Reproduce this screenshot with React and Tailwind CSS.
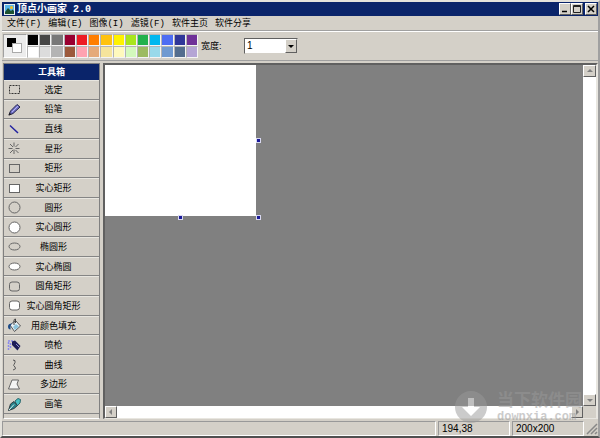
import { useState } from "react";

const menus = [
  { name: "文件", key: "(F)" },
  { name: "编辑", key: "(E)" },
  { name: "图像", key: "(I)" },
  { name: "滤镜", key: "(F)" },
  { name: "软件主页" },
  { name: "软件分享" }
];

const palette = [
  "#000000", "#464646", "#787878", "#990030", "#ed1c24", "#ff7e00", "#ffc20e",
  "#fff200", "#a8e61d", "#22b14c", "#00b7ef", "#4d6df3", "#2f3699", "#6f3198",
  "#ffffff", "#dcdcdc", "#b4b4b4", "#9c5a3c", "#ffa3b1", "#e5aa7a", "#f5e49c",
  "#fff9bd", "#d3f9bc", "#9dbb61", "#99d9ea", "#709ad1", "#546d8e", "#b5a5d5"
];

const tools = [
  { name: "选定", icon: <rect x="2.5" y="3.5" width="10" height="8" fill="none" stroke="#333" strokeDasharray="2 1" /> },
  {
    name: "铅笔",
    icon: (
      <>
        <path d="M2 13l1.5-4L10 2.500 13 5 6 11.500z" fill="#7474c8" stroke="#22224e" strokeWidth="1" />
        <path d="M5 10l6-6" stroke="#b4b4f4" />
        <path d="M1.500 13.500l1-3 2 2z" fill="#222" />
      </>
    )
  },
  { name: "直线", icon: <path d="M3 3.500l8 7.500" stroke="#2222a0" strokeWidth="1.500" /> },
  { name: "星形", icon: <path d="M7 1.500v4M7 8.500v4.500M1.500 7.500h4M8.500 7.500h4M3 3l3 3M11.500 3l-3 3M3 12l3-3M11.500 12l-3-3" stroke="#666" /> },
  { name: "矩形", icon: <rect x="2.500" y="3.500" width="10" height="8" fill="none" stroke="#666" /> },
  { name: "实心矩形", icon: <rect x="2.500" y="3.500" width="10" height="8" fill="#fff" stroke="#666" /> },
  { name: "圆形", icon: <circle cx="7.500" cy="7.500" r="5.500" fill="none" stroke="#666" /> },
  { name: "实心圆形", icon: <circle cx="7.500" cy="7.500" r="5.500" fill="#fff" stroke="#666" /> },
  { name: "椭圆形", icon: <ellipse cx="7.500" cy="7.500" rx="5.500" ry="3.500" fill="none" stroke="#666" /> },
  { name: "实心椭圆", icon: <ellipse cx="7.500" cy="7.500" rx="5.500" ry="3.500" fill="#fff" stroke="#666" /> },
  { name: "圆角矩形", icon: <rect x="2.500" y="3" width="10" height="9" rx="2.500" fill="none" stroke="#666" /> },
  { name: "实心圆角矩形", icon: <rect x="2.500" y="3" width="10" height="9" rx="2.500" fill="#fff" stroke="#666" /> },
  {
    name: "用颜色填充",
    icon: (
      <>
        <path d="M3 7l5.500-4.500 5 5.500-6 5.500z" fill="#e8f0f4" stroke="#555" />
        <path d="M6 9l3-3 3 2.500-4 3.500z" fill="#8cc4dc" />
        <path d="M7 7V2.500q0-1.500 1.500-1.500v4" fill="none" stroke="#444" />
        <path d="M1 8.500q0-3 4-3L3.500 7.500v4q-2.500 0-2.500-3z" fill="#1c4a86" />
      </>
    )
  },
  {
    name: "喷枪",
    icon: (
      <>
        <path d="M1 3h5M1.500 4v8M3.500 5v5" stroke="#8888ec" strokeWidth="1.500" strokeDasharray="2 1" />
        <path d="M5 3.500l3-1 5.500 5.500-3 4.500L5 7z" fill="#1c1c58" />
        <path d="M9 6l3 3" stroke="#9090d0" />
      </>
    )
  },
  { name: "曲线", icon: <path d="M6 3q3 0 2 2.500T6.500 8 8 10t-2 3" fill="none" stroke="#555" /> },
  { name: "多边形", icon: <path d="M5 3h6.500L10 7l2.500 5h-11z" fill="#f4f4f4" stroke="#666" /> },
  {
    name: "画笔",
    icon: (
      <>
        <path d="M8 4l3-2.500 2.500 1L13 6l-3 3z" fill="#48c0c4" stroke="#28666c" />
        <path d="M1.500 13.500L3.500 7 7 4.500l3.500 4L7 11.500z" fill="#26808a" stroke="#303c40" />
        <path d="M2 13l5-5.500" stroke="#d8f4f4" />
      </>
    )
  }
];

const raised = "bg-[#d4d0c8] border border-t-white border-l-white border-r-[#606060] border-b-[#606060]";

function Arrow({ d, color = "#808080" }) {
  return (
    <svg className="w-2 h-2" viewBox="0 0 8 8" aria-hidden="true">
      <path d={d} fill={color} />
    </svg>
  );
}

function TitleBar() {
  return (
    <header className="h-[14px] shrink-0 flex items-center bg-[#0a246a] text-white">
      <svg className="w-[11px] h-[11px] ml-[2px] mr-[2px]" viewBox="0 0 11 11" aria-hidden="true">
        <rect width="11" height="11" fill="#e8f0f0" />
        <rect x="1" y="1" width="9" height="9" fill="#57b4e8" />
        <circle cx="7.500" cy="3.500" r="1.500" fill="#f8c020" />
        <path d="M1 8l3-4 3 3 1.500-1.500L10 7v3H1z" fill="#1b5130" />
      </svg>
      <h1 className="text-[10px] leading-3 font-bold flex-1 whitespace-pre">
        顶点小画家<span className="font-['Liberation_Mono','Noto_Sans_CJK_SC',monospace]"> 2.0</span>
      </h1>
      <div className="flex pr-px">
        <button aria-label="最小化" className={`w-3 h-3 ${raised}`}>
          <svg viewBox="0 0 10 10"><path d="M2 7.500h5" stroke="#000" strokeWidth="1.500" /></svg>
        </button>
        <button aria-label="最大化" className={`w-3 h-3 ${raised}`}>
          <svg viewBox="0 0 10 10"><path d="M1.500 1.500h7v7h-7zM1.500 2.500h7" fill="none" stroke="#222" /></svg>
        </button>
        <button aria-label="关闭" className={`w-3 h-3 ml-[2px] ${raised}`}>
          <svg viewBox="0 0 10 10"><path d="M2 2l6 6M8 2L2 8" stroke="#000" strokeWidth="1.500" /></svg>
        </button>
      </div>
    </header>
  );
}

function Toolbar() {
  const [width, setWidth] = useState("1");
  const [color, setColor] = useState("#000000");

  return (
    <div className="h-[29px] shrink-0 flex items-center border-t border-white pl-px">
      <div className="w-6 h-6 p-[2px] bg-[#ececec] border border-t-[#a0a0a0] border-l-[#a0a0a0] border-white">
        <svg viewBox="0 0 18 18">
          <rect x="1" y="1" width="9" height="9" fill={color} />
          <rect x="6.500" y="6.500" width="9" height="9" fill="#fff" stroke="#aaa" />
        </svg>
      </div>
      <div className="grid grid-cols-14 w-[171px]">
        {palette.map(c => (
          <button
            key={c}
            aria-label={c}
            onClick={() => setColor(c)}
            className="h-3 border border-t-[#b4b4b4] border-l-[#b4b4b4] border-r-[#f4f4f4] border-b-[#f4f4f4]"
            style={{ backgroundColor: c }}
          />
        ))}
      </div>
      <label htmlFor="pen-width" className="ml-[3px] w-[43px]">宽度:</label>
      <div className="relative w-[54px] h-4">
        <select
          id="pen-width"
          value={width}
          onChange={e => setWidth(e.target.value)}
          className="appearance-none block w-full h-4 pl-[2px] bg-white border border-t-[#606060] border-l-[#606060] border-[#d4d0c8] font-['Liberation_Sans',sans-serif] text-[10px] leading-3"
        >
          <option>1</option>
          <option>2</option>
          <option>3</option>
          <option>4</option>
          <option>5</option>
        </select>
        <span className={`absolute right-px top-px bottom-px w-3 flex items-center justify-center pointer-events-none ${raised}`}>
          <Arrow d="M1 3h6L4 6z" color="#000" />
        </span>
      </div>
    </div>
  );
}

function ToolBox() {
  const [active, setActive] = useState("铅笔");

  return (
    <aside className="w-[97px] shrink-0 flex flex-col border border-[#808080] border-b-white">
      <h2 className="h-4 shrink-0 bg-[#0a246a] text-white font-bold text-center leading-4">工具箱</h2>
      <div className="flex-1 flex flex-col pb-1">
        {tools.map(tool => (
          <button
            key={tool.name}
            aria-pressed={active === tool.name}
            onClick={() => setActive(tool.name)}
            className="flex-1 flex items-center border-b border-b-[#858585] border-t border-t-[#e8e6e0] pl-[3px]"
          >
            <svg className="w-[15px] h-[15px] shrink-0" viewBox="0 0 15 15" aria-hidden="true">{tool.icon}</svg>
            <span className="flex-1 pr-[14px] whitespace-nowrap">{tool.name}</span>
          </button>
        ))}
      </div>
    </aside>
  );
}

const handle = "absolute w-[5px] h-[5px] bg-[#1a1a9a] border border-[#d8d8f0]";

function Workspace() {
  return (
    <main className="flex-1 min-w-0 grid grid-cols-[1fr_13px] grid-rows-[1fr_12px] border-2 border-t-[#606060] border-l-[#606060] border-[#e8e6e0] border-b">
      <div className="bg-[#808080]">
        {/* drawing sheet with its resize handles */}
        <div className="relative w-[151px] h-[151px] bg-white">
          <span className={`${handle} -right-[5px] top-[73px]`}></span>
          <span className={`${handle} left-[73px] -bottom-[4px]`}></span>
          <span className={`${handle} -right-[5px] -bottom-[4px]`}></span>
        </div>
      </div>
      <div className="bg-white flex flex-col justify-between">
        <button aria-label="向上" className={`h-3 flex items-center justify-center ${raised}`}><Arrow d="M4 2l3 3H1z" /></button>
        <button aria-label="向下" className={`h-3 flex items-center justify-center ${raised}`}><Arrow d="M1 3h6L4 6z" /></button>
      </div>
      <div className="bg-white flex justify-between">
        <button aria-label="向左" className={`w-3 flex items-center justify-center ${raised}`}><Arrow d="M5 1v6L2 4z" /></button>
        <button aria-label="向右" className={`w-3 flex items-center justify-center ${raised}`}><Arrow d="M3 1v6l3-3z" /></button>
      </div>
      <div className="bg-[#d4d0c8]"></div>
    </main>
  );
}

function StatusBar() {
  const panel = "flex items-end border border-t-[#999] border-l-[#999] border-r-white border-b-white";
  return (
    <footer className="h-[15px] shrink-0 flex gap-[2px] font-['Liberation_Sans',sans-serif] text-[10px] leading-3">
      <div className={`flex-1 ${panel}`}></div>
      <div className={`w-[72px] pl-[3px] ${panel}`}>194,38</div>
      <div className={`w-[72px] pl-[3px] ${panel}`}>200x200</div>
      <svg className="w-3 h-[14px]" viewBox="0 0 12 14" aria-hidden="true">
        <path d="M1 13L11 3M5 13l6-6M9 13l2-2" stroke="#888" strokeWidth="1.500" />
      </svg>
    </footer>
  );
}

function Watermark() {
  return (
    <div className="absolute right-[16px] bottom-3 flex items-center gap-[9px] opacity-50 text-[#999] pointer-events-none">
      <svg className="w-[34px] h-[34px]" viewBox="0 0 34 34" aria-hidden="true">
        <circle cx="17" cy="17" r="16" fill="#999" />
        <path d="M14 8h6v9h6l-9 9-9-9h6z" fill="#fff" />
      </svg>
      <div className="font-bold">
        <div className="text-[17px] leading-5">当下软件园</div>
        <div className="font-['Liberation_Mono',monospace] text-[12px] leading-3">downxia.com</div>
      </div>
    </div>
  );
}

function App() {
  return (
    <div className="relative min-h-screen flex flex-col bg-[#d4d0c8] border-2 border-t-[#e4e2dc] border-l-[#e4e2dc] border-r-[#a0a0a0] border-b-[#505050] font-['Liberation_Sans','Noto_Sans_CJK_SC',sans-serif] text-[9px] leading-3 text-black">
      <TitleBar />
      <nav className="h-[15px] shrink-0 flex items-center gap-[7px] pl-[5px] border-b border-[#a0a0a0]">
        {menus.map((menu, i) => (
          <button key={i} className="whitespace-nowrap">
            {menu.name}
            {menu.key && <span className="font-['Liberation_Mono',monospace]">{menu.key}</span>}
          </button>
        ))}
      </nav>
      <Toolbar />
      <div className="flex-1 flex gap-[3px] border-t border-[#a0a0a0] pt-[2px] pl-px">
        <ToolBox />
        <Workspace />
      </div>
      <div className="pt-[2px]">
        <StatusBar />
      </div>
      <Watermark />
    </div>
  );
}

export default App;
